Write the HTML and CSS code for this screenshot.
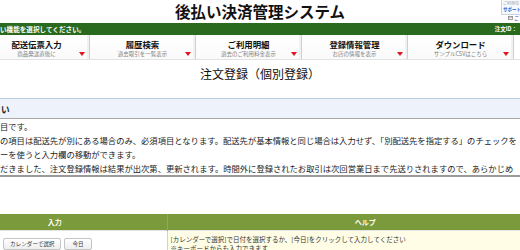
FILE: index.html
```html
<!DOCTYPE html>
<html lang="ja">
<head>
    <meta charset="UTF-8">
    <title>注文登録（個別登録）</title>
    <link rel="stylesheet" href="styles.css">
</head>
<body>
<div class="header">
    <div></div>
    <h1 class="logo">後払い決済管理システム</h1>
    <div class="support">
        <div class="support-box">
            <span class="support-note">ご利用の</span>
            <span class="support-link">サポート</span>
        </div>
        <div class="support-mail">
            <svg width="5" height="4" viewBox="0 0 5 4"><rect x="0.5" y="0.5" width="4" height="3" fill="#fff" stroke="#888" stroke-width="0.8"/><path d="M0.5 0.5 L2.5 2.2 L4.5 0.5" fill="none" stroke="#888" stroke-width="0.7"/></svg>
            <span>ご</span>
        </div>
    </div>
</div>

<div class="guide-bar">
    <span>い機能を選択してください。</span>
    <span class="order-id">注文ID：</span>
</div>

<ul class="menu">
    <li><b>配送伝票入力</b><small>商品発送直後に</small></li>
    <li><b>履歴検索</b><small>過去取引を一覧表示</small></li>
    <li><b>ご利用明細</b><small>過去のご利用料金表示</small></li>
    <li><b>登録情報管理</b><small>お店の情報を表示</small></li>
    <li><b>ダウンロード</b><small>サンプルCSVはこちら</small></li>
</ul>

<h2 class="page-title">注文登録（個別登録）</h2>

<div class="notice">
    <div class="notice-head">い</div>
    <div class="notice-body">
        <p>目です。</p>
        <p>の項目は配送先が別にある場合のみ、必須項目となります。配送先が基本情報と同じ場合は入力せず、「別配送先を指定する」のチェックを</p>
        <p>ーを使うと入力欄の移動ができます。</p>
        <p>だきました、注文登録情報は結果が出次第、更新されます。時間外に登録されたお取引は次回営業日まで先送りされますので、あらかじめ</p>
    </div>
</div>

<table class="form-table">
    <tr>
        <th class="col-input">入力</th>
        <th>ヘルプ</th>
    </tr>
    <tr>
        <td class="col-input">
            <div class="buttons">
                <button>カレンダーで選択</button>
                <button>今日</button>
            </div>
        </td>
        <td class="help">
            <p>[カレンダーで選択]で日付を選択するか、[今日]をクリックして入力してください</p>
            <p>※キーボードからも入力できます</p>
        </td>
    </tr>
</table>
</body>
</html>
```

FILE: styles.css
```css
* {
    padding: 0;
    margin: 0;
    list-style: none;
    box-sizing: border-box;
}

body {
    width: 520px;
    height: 250px;
    overflow: hidden;
    font-family: "Noto Sans CJK JP", "Noto Sans", sans-serif;
    color: #222;
    background: #fff;
}

.header {
    display: grid;
    grid-template-columns: 1fr auto 1fr;
    height: 23px;
}

.logo {
    font-size: 15.5px;
    line-height: 22px;
    font-weight: bold;
    color: #111;
}

.support {
    justify-self: end;
    width: 19px;
    overflow: hidden;
}

.support-box {
    height: 15px;
    border: 1px solid #c9d3e0;
    border-top: 0;
    border-right: 0;
    background: #f7f9fc;
    padding-left: 1px;
    display: flex;
    flex-direction: column;
}

.support-note {
    font-size: 4px;
    line-height: 6px;
    color: #999;
    white-space: nowrap;
}

.support-link {
    font-size: 4.5px;
    line-height: 6px;
    font-weight: bold;
    color: #2255cc;
    white-space: nowrap;
}

.support-mail {
    display: flex;
    align-items: center;
    gap: 1px;
    padding-left: 7px;
    height: 5px;
    font-size: 5px;
    color: #2255cc;
}

.guide-bar {
    display: flex;
    justify-content: space-between;
    height: 12px;
    padding-right: 3px;
    background: #2a6a1f;
    color: #fff;
    font-size: 6.6px;
    line-height: 12px;
    font-weight: bold;
    white-space: nowrap;
}

.order-id {
    font-size: 5.5px;
}

.menu {
    display: flex;
    height: 25px;
    margin-left: -16px;
    border-bottom: 1px solid #e2e2e2;
}

.menu li {
    position: relative;
    flex: 0 0 106px;
    display: flex;
    flex-direction: column;
    align-items: center;
    padding-top: 4px;
    border-right: 1px solid #cfcfcf;
    box-shadow: inset -2px 0 0 #f1f1f1;
    background: linear-gradient(#fff, #fafafa);
}

.menu b {
    font-size: 8.4px;
    line-height: 10px;
    color: #111;
}

.menu small {
    font-size: 5.5px;
    line-height: 8px;
    margin-top: 1px;
    color: #808080;
    white-space: nowrap;
}

.menu li::after {
    content: "";
    position: absolute;
    right: 4px;
    top: 17px;
    border-left: 3.5px solid transparent;
    border-right: 3.5px solid transparent;
    border-top: 4px solid #e0141e;
}

.page-title {
    margin-top: 4px;
    font-size: 12px;
    line-height: 20px;
    font-weight: normal;
    text-align: center;
    color: #111;
}

.notice {
    margin-top: 14px;
    border-bottom: 2px solid #9a9a9a;
}

.notice-head {
    height: 21px;
    padding-left: 1px;
    border-top: 1px solid #bccbe0;
    border-bottom: 1px solid #a8a8a8;
    background: #eef3fb;
    font-size: 8.6px;
    line-height: 20px;
    font-weight: bold;
}

.notice-body p {
    font-size: 8.3px;
    line-height: 14px;
    white-space: nowrap;
    color: #222;
}

.form-table {
    margin-top: 37px;
    margin-left: -57px;
    width: 620px;
    border-collapse: collapse;
}

.form-table th {
    height: 16px;
    background: #7b9a3b;
    color: #fff;
    font-size: 7px;
    line-height: 16px;
    font-weight: bold;
    text-align: center;
}

.form-table th.col-input {
    width: 224px;
    border-right: 1px solid #8fab55;
}

.form-table td {
    vertical-align: top;
    border-top: 1px solid #e4e4e4;
}

.form-table td.col-input {
    padding: 7px 0 0 60px;
    border-right: 1px solid #d4d4c0;
}

.buttons {
    display: flex;
    gap: 3px;
}

.buttons button {
    height: 12px;
    padding: 0 6px;
    border: 1px solid #c4c4c4;
    border-radius: 2px;
    background: linear-gradient(#fff, #eee);
    font-family: "Noto Sans CJK JP", sans-serif;
    font-size: 5.6px;
    line-height: 10px;
    color: #333;
}

.buttons button:last-child {
    padding: 0 7px;
}

.help {
    background: #fffde6;
    padding: 4px 0 0 3px;
    font-size: 6.5px;
    line-height: 9px;
    color: #333;
    white-space: nowrap;
}
```
